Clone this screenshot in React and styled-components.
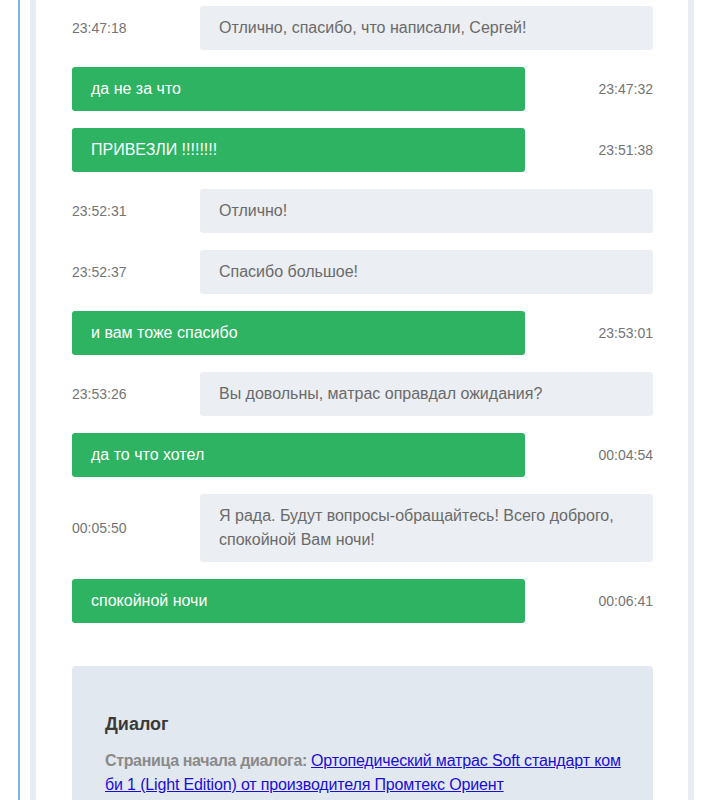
import styled, { createGlobalStyle } from 'styled-components';

const GlobalStyle = createGlobalStyle`
  body {
    margin: 0;
    background: #fff;
    font-family: "Liberation Sans", Arial, sans-serif;
  }
`

const messages = [
  { from: 'op', time: '23:47:18', text: 'Отлично, спасибо, что написали, Сергей!' },
  { from: 'me', time: '23:47:32', text: 'да не за что' },
  { from: 'me', time: '23:51:38', text: 'ПРИВЕЗЛИ !!!!!!!!' },
  { from: 'op', time: '23:52:31', text: 'Отлично!' },
  { from: 'op', time: '23:52:37', text: 'Спасибо большое!' },
  { from: 'me', time: '23:53:01', text: 'и вам тоже спасибо' },
  { from: 'op', time: '23:53:26', text: 'Вы довольны, матрас оправдал ожидания?' },
  { from: 'me', time: '00:04:54', text: 'да то что хотел' },
  { from: 'op', time: '00:05:50', text: 'Я рада. Будут вопросы-обращайтесь! Всего доброго, спокойной Вам ночи!' },
  { from: 'me', time: '00:06:41', text: 'спокойной ночи' },
]

export default function App() {
  return (
    <>
      <GlobalStyle />
      <Wrapper>
        <Panel>
          <Chat>
            {messages.map((m, i) => (
              <Row key={i} $mine={m.from === 'me'}>
                <Time>{m.time}</Time>
                <Bubble $mine={m.from === 'me'}>{m.text}</Bubble>
              </Row>
            ))}
          </Chat>
          <Dialog>
            <DialogTitle>Диалог</DialogTitle>
            <DialogText>
              <b>Страница начала диалога: </b>
              <a href="#">Ортопедический матрас Soft стандарт комби 1 (Light Edition) от производителя Промтекс Ориент</a>
            </DialogText>
          </Dialog>
        </Panel>
      </Wrapper>
    </>
  )
}

const Wrapper = styled.div`
  margin: 0 14px 0 18px;
  padding-left: 10px;
  border-left: 2px solid #7fb5da;
  min-height: 800px;
`
const Panel = styled.div`
  border: 6px solid #e7edf2;
  border-top: none;
  background: #fff;
  padding: 6px 35px 40px 36px;
  min-height: 794px;
`
const Chat = styled.div`
  display: flex;
  flex-direction: column;
  gap: 17px;
`
const Row = styled.div`
  display: flex;
  align-items: center;
  justify-content: space-between;
  flex-direction: ${p => (p.$mine ? 'row-reverse' : 'row')};
`
const Time = styled.span`
  font-size: 14px;
  color: #747474;
`
const Bubble = styled.div`
  width: 453px;
  box-sizing: border-box;
  padding: 10px 19px;
  border-radius: 3px;
  font-size: 16px;
  line-height: 24px;
  background: ${p => (p.$mine ? '#2db362' : '#ebeef2')};
  color: ${p => (p.$mine ? '#fff' : '#6a6a6a')};
`
const Dialog = styled.div`
  margin-top: 43px;
  background: #e2e8ef;
  border-radius: 4px;
  padding: 48px 31px 30px 33px;
`
const DialogTitle = styled.h3`
  margin: 0 0 14px;
  font-size: 18px;
  font-weight: bold;
  color: #3a3a3a;
`
const DialogText = styled.p`
  margin: 0;
  font-size: 16px;
  line-height: 24px;
  word-break: break-all;
  b {
    color: #8a8a8a;
    letter-spacing: -0.35px;
  }
  a {
    color: #1a0dd6;
    text-decoration: underline;
    letter-spacing: -0.15px;
  }
`
